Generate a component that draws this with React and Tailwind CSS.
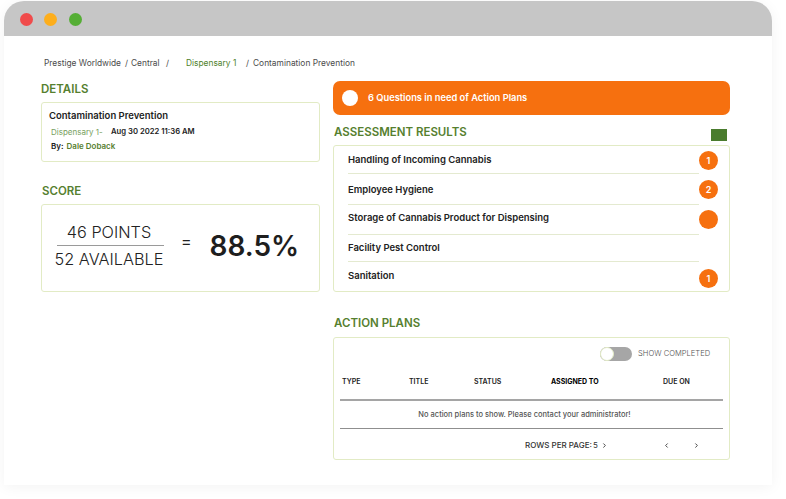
import React from "react";
import { ChevronLeft, ChevronRight } from "lucide-react";

const font = { fontFamily: "Inter, 'Noto Sans', sans-serif" };

function Heading({ children, className = "" }) {
  return <h2 className={`text-[11.5px] leading-[16px] font-semibold text-[#56802f] ${className}`}>{children}</h2>;
}

function Badge({ n, top }) {
  return (
    <div className={`w-[19px] h-[19px] rounded-full bg-[#f6700f] text-white text-[9px] font-semibold flex items-center justify-center shrink-0 ${top}`}>
      {n}
    </div>
  );
}

function ResultRow({ title, n, height, textTop, badgeTop, showBadge = true, last = false }) {
  return (
    <div className={`flex items-start pl-[14px] ${height}`}>
      <div className={`w-[351px] h-full ${textTop} ${last ? "" : "border-b border-[#e4ead0]"} text-[9.5px] leading-[12px] font-semibold text-[#222]`}>
        {title}
      </div>
      {showBadge && <Badge n={n} top={badgeTop} />}
    </div>
  );
}

export default function App() {
  return (
    <div className="w-[786px] h-[499px] bg-white overflow-hidden pl-[4px] pt-[1px]" style={font}>
      <div className="w-[768px] h-[484px] bg-white shadow-[0_2px_14px_rgba(0,0,0,0.05)] rounded-t-[20px]">
        <div className="h-[35px] bg-[#c6c6c6] rounded-t-[20px] flex items-center pl-[16px] pt-[1px]">
          <span className="w-[13px] h-[13px] rounded-full bg-[#f04b4b]" />
          <span className="w-[13px] h-[13px] rounded-full bg-[#fdae1c] ml-[11px]" />
          <span className="w-[13px] h-[13px] rounded-full bg-[#55ae35] ml-[12px]" />
        </div>

        <div className="pl-[37px]">
          <nav className="flex items-center h-[12px] mt-[21px] pl-[3px] text-[8.4px] leading-[12px] text-[#4b4b4b]">
            <span className="w-[81px] whitespace-nowrap">Prestige Worldwide</span>
            <span className="w-[6px]">/</span>
            <span className="w-[35px]">Central</span>
            <span className="w-[20px]">/</span>
            <span className="w-[60px] text-[#4f7f2b] whitespace-nowrap">Dispensary 1</span>
            <span className="w-[7px]">/</span>
            <span className="whitespace-nowrap">Contamination Prevention</span>
          </nav>

          <div className="flex gap-[13px] mt-[12px]">
            <section className="w-[279px]">
              <Heading>DETAILS</Heading>
              <div className="mt-[5px] h-[60px] border border-[#e2ebc5] rounded-[3px] pl-[7px] pt-[6px]">
                <div className="text-[9.5px] leading-[13px] font-semibold text-[#222]">Contamination Prevention</div>
                <div className="flex mt-[4px] pl-[2px] text-[8px] leading-[12px]">
                  <span className="w-[60px] text-[#77a05e]">Dispensary 1-</span>
                  <span className="font-semibold text-[#222] text-[7.7px]">Aug 30 2022 11:36 AM</span>
                </div>
                <div className="mt-[2px] pl-[2px] text-[8px] leading-[12px] font-semibold text-[#222]">
                  By: <span className="ml-[1px] text-[#56802f]">Dale Doback</span>
                </div>
              </div>

              <Heading className="mt-[21px] ml-[1px]">SCORE</Heading>
              <div className="mt-[5px] h-[88px] border border-[#e2ebc5] rounded-[3px] flex items-start pl-[12px] pt-[15px] text-[#222]">
                <div className="w-[110px] text-center text-[16.3px] leading-[24px] font-light">
                  <div>46 POINTS</div>
                  <div className="h-[1px] bg-[#9a9a9a] ml-[3px] mt-[1px] mb-[1px]" />
                  <div className="whitespace-nowrap">52 AVAILABLE</div>
                </div>
                <span className="ml-[17px] mt-[11px] text-[16px] leading-[20px]">=</span>
                <span className="ml-[18px] mt-[8px] text-[28px] leading-[36px] font-semibold text-[#1e1e1e]">88.5%</span>
              </div>
            </section>

            <section className="w-[397px]">
              <div className="h-[34px] rounded-[7px] bg-[#f6700f] flex items-center pl-[9px] text-white text-[9.3px] font-semibold">
                <span className="w-[16px] h-[16px] rounded-full bg-white mr-[10px]" />
                6 Questions in need of Action Plans
              </div>
              <div className="flex items-end justify-between mt-[9px] h-[17px]">
                <Heading className="mb-[1px] ml-[1px]">ASSESSMENT RESULTS</Heading>
                <span className="w-[16px] h-[12px] bg-[#4a7c2e] mr-[3px]" />
              </div>
              <div className="mt-[4px] h-[147px] border border-[#e2ebc5] rounded-[3px]">
                <ResultRow title="Handling of Incoming Cannabis" n="1" height="h-[28px]" textTop="pt-[8px]" badgeTop="mt-[5px]" />
                <ResultRow title="Employee Hygiene" n="2" height="h-[31px]" textTop="pt-[10px]" badgeTop="mt-[6px]" />
                <ResultRow title="Storage of Cannabis Product for Dispensing" n="" height="h-[30px]" textTop="pt-[7px]" badgeTop="mt-[5px]" />
                <ResultRow title="Facility Pest Control" height="h-[27px]" textTop="pt-[7px]" showBadge={false} />
                <ResultRow title="Sanitation" n="1" height="h-[29px]" textTop="pt-[8px]" badgeTop="mt-[7px]" last />
              </div>

              <Heading className="mt-[23px] ml-[1px]">ACTION PLANS</Heading>
              <div className="mt-[6px] h-[123px] border border-[#e2ebc5] rounded-[3px]">
                <div className="flex items-center h-[14px] mt-[9px] pl-[266px]">
                  <div className="w-[32px] h-[14px] rounded-full bg-[#a6a6a6] mr-[6px] shrink-0">
                    <div className="w-[14px] h-[14px] rounded-full bg-white border border-[#e2ebc5]" />
                  </div>
                  <span className="text-[7.6px] leading-[12px] font-light text-[#555] whitespace-nowrap">SHOW COMPLETED</span>
                </div>
                <div className="flex pl-[8px] mt-[15px] h-[12px] text-[7px] leading-[12px] font-semibold text-[#222]">
                  <span className="w-[67px]">TYPE</span>
                  <span className="w-[65px]">TITLE</span>
                  <span className="w-[77px]">STATUS</span>
                  <span className="w-[112px] font-bold text-black">ASSIGNED TO</span>
                  <span>DUE ON</span>
                </div>
                <div className="mx-[6px] mt-[11px] h-[2px] bg-[#a5a5a5]" />
                <div className="h-[27px] flex items-center justify-center text-[7.5px] font-medium text-[#555] pr-[14px]">
                  No action plans to show. Please contact your administrator!
                </div>
                <div className="mx-[6px] h-[1px] bg-[#8f8f8f]" />
                <div className="flex items-center h-[12px] mt-[10px] pl-[191px] text-[8px] leading-[12px] text-[#333]">
                  <span className="w-[68px] font-medium whitespace-nowrap">ROWS PER PAGE:</span>
                  <span className="w-[8px]">5</span>
                  <ChevronRight className="w-[7px] h-[7px]" strokeWidth={3} />
                  <ChevronLeft className="w-[7px] h-[7px] ml-[55px]" strokeWidth={3} />
                  <ChevronRight className="w-[7px] h-[7px] ml-[23px]" strokeWidth={3} />
                </div>
              </div>
            </section>
          </div>
        </div>
      </div>
    </div>
  );
}
